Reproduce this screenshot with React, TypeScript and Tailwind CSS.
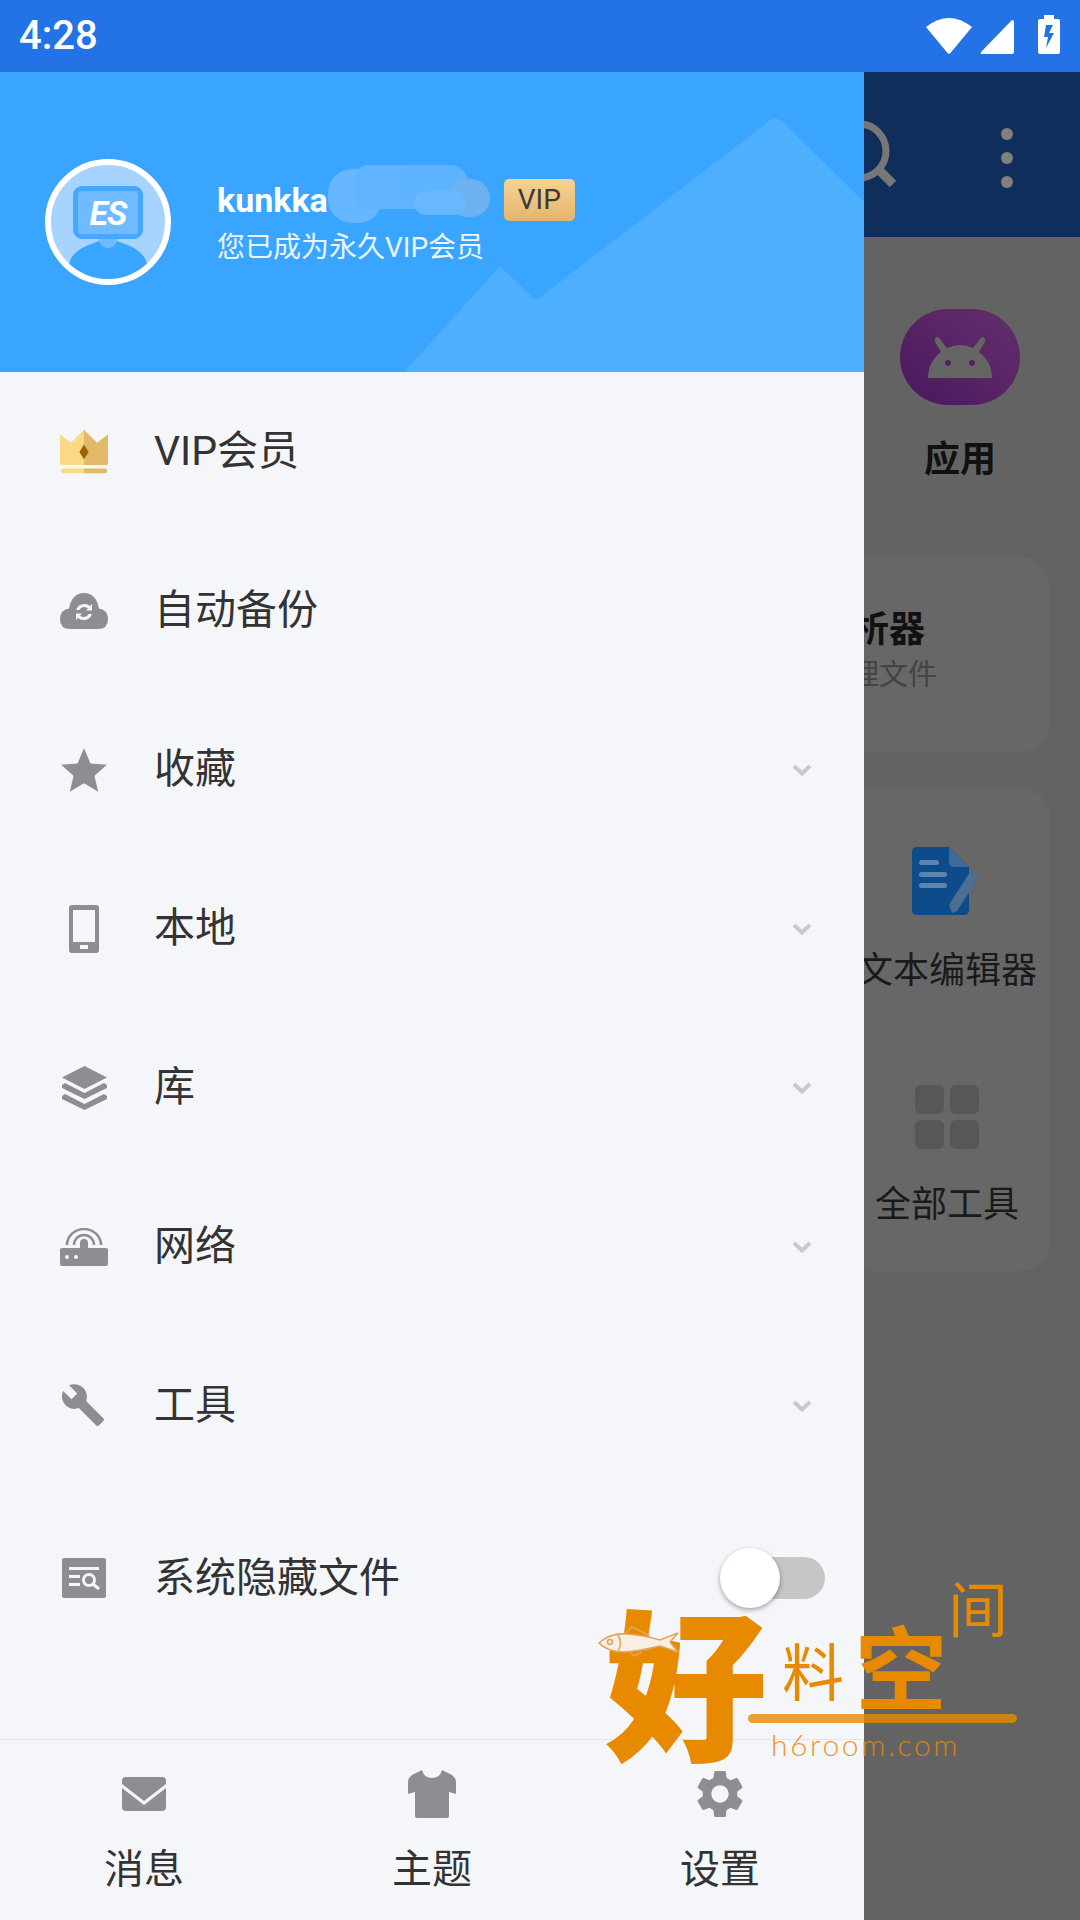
import React from "react";

const GRAY = "#8e8e92";

function Crown() {
  return (
    <svg width="52" height="47" viewBox="0 0 52 47">
      <path d="M0 5 L12 14 L26 0 L26 38 L2 38 Q0 38 0 36 Z" fill="#fbd987" />
      <path d="M52 5 L40 14 L26 0 L26 38 L50 38 Q52 38 52 36 Z" fill="#e2b968" />
      <path d="M26 16 L31 24 L26 32 L21 24 Z" fill="#9a6205" />
      <path d="M3 42 H26 V47 H3 Q1 47 1 44.5 Q1 42 3 42 Z" fill="#fbd987" />
      <path d="M49 42 H26 V47 H49 Q51 47 51 44.5 Q51 42 49 42 Z" fill="#e2b968" />
    </svg>
  );
}

function Cloud() {
  return (
    <svg width="48" height="36" viewBox="0 0 48 36">
      <path d="M10 36 Q0 36 0 26 Q0 17 9 15.5 Q12 0 24 0 Q36 0 39 15.5 Q48 17 48 26 Q48 36 38 36 Z" fill={GRAY} />
      <path d="M16 17 Q18 11 24.5 11 Q28 11 30 13 L32 11 V17.5 H26 L28 15.5 Q26.5 14 24.5 14 Q21 14 19.5 17 Z" fill="#f4f6f9" />
      <path d="M32 21 Q30 27 23.5 27 Q20 27 18 25 L16 27 V20.5 H22 L20 22.5 Q21.5 24 23.5 24 Q27 24 28.5 21 Z" fill="#f4f6f9" />
    </svg>
  );
}

function Star() {
  return (
    <svg width="46" height="46" viewBox="2 2 20 19">
      <path d="M12 17.27L18.18 21l-1.64-7.03L22 9.24l-7.19-.61L12 2 9.19 8.63 2 9.24l5.46 4.73L5.82 21z" fill={GRAY} />
    </svg>
  );
}

function Phone() {
  return (
    <svg width="30" height="48" viewBox="0 0 30 48">
      <path fillRule="evenodd" d="M3 0 H27 Q30 0 30 3 V45 Q30 48 27 48 H3 Q0 48 0 45 V3 Q0 0 3 0 Z M4 5 V37 H26 V5 Z M11 40 V44 H19 V40 Z" fill={GRAY} />
    </svg>
  );
}

function Layers() {
  return (
    <svg width="45" height="44" viewBox="0 0 45 44">
      <path d="M22.5 0 L45 11.5 L22.5 23 L0 11.5 Z" fill={GRAY} />
      <path d="M3 17 L22.5 27 L42 17 L45 19 L45 22 L22.5 33 L0 22 L0 19 Z" fill={GRAY} />
      <path d="M3 28 L22.5 38 L42 28 L45 30 L45 33 L22.5 44 L0 33 L0 30 Z" fill={GRAY} />
    </svg>
  );
}

function Router() {
  return (
    <svg width="48" height="38" viewBox="0 0 48 38">
      <path d="M2 20 H20 V15 A4 4 0 1 1 28 15 V20 H46 Q48 20 48 22 V36 Q48 38 46 38 H2 Q0 38 0 36 V22 Q0 20 2 20 Z" fill={GRAY} />
      <circle cx="7" cy="29" r="2" fill="#f4f6f9" />
      <circle cx="16" cy="29" r="2" fill="#f4f6f9" />
      <path d="M14 17 A10 10 0 0 1 34 17" fill="none" stroke={GRAY} strokeWidth="2.5" />
      <path d="M7 17 A17 16 0 0 1 41 17" fill="none" stroke={GRAY} strokeWidth="2.5" />
    </svg>
  );
}

function Wrench() {
  return (
    <svg width="46" height="44" viewBox="1 1 23 23">
      <path d="M22.7 19l-9.1-9.1c.9-2.3.4-5-1.5-6.9-2-2-5-2.4-7.4-1.3L9 6 6 9 1.6 4.7C.4 7.1.9 10.1 2.9 12.1c1.9 1.9 4.6 2.4 6.9 1.5l9.1 9.1c.4.4 1 .4 1.4 0l2.3-2.3c.5-.4.5-1.1.1-1.4z" fill={GRAY} />
    </svg>
  );
}

function SysFile() {
  return (
    <svg width="44" height="40" viewBox="0 0 44 40">
      <rect width="44" height="40" rx="2" fill={GRAY} />
      <rect x="7" y="9" width="30" height="3" fill="#f4f6f9" />
      <rect x="7" y="17" width="11" height="3" fill="#f4f6f9" />
      <rect x="7" y="25" width="11" height="3" fill="#f4f6f9" />
      <circle cx="27" cy="22" r="5.5" fill="none" stroke="#f4f6f9" strokeWidth="3" />
      <path d="M31 26 L37 31" stroke="#f4f6f9" strokeWidth="3" />
    </svg>
  );
}

function Chevron() {
  return (
    <svg width="20" height="12" viewBox="0 0 20 12">
      <path d="M2 2 L10 9.5 L18 2" fill="none" stroke="#c9c9cb" strokeWidth="4" />
    </svg>
  );
}

function Envelope() {
  return (
    <svg width="44" height="34" viewBox="0 0 44 34">
      <path d="M4 0 H40 Q44 0 44 4 V7 L22 24 L0 7 V4 Q0 0 4 0 Z" fill={GRAY} />
      <path d="M0 11 L22 28 L44 11 V30 Q44 34 40 34 H4 Q0 34 0 30 Z" fill={GRAY} />
    </svg>
  );
}

function Shirt() {
  return (
    <svg width="48" height="48" viewBox="0 0 48 48">
      <path d="M14 0 Q16 8 24 8 Q32 8 34 0 L42 4 Q48 7 48 12 V24 L41 22 V46 Q41 48 39 48 H9 Q7 48 7 46 V22 L0 24 V12 Q0 7 6 4 Z" fill={GRAY} />
    </svg>
  );
}

function Gear() {
  return (
    <svg width="50" height="50" viewBox="2 1.6 20 20.8">
      <path fillRule="evenodd" d="M19.14 12.94c.04-.3.06-.61.06-.94 0-.32-.02-.64-.07-.94l2.03-1.58c.18-.14.23-.41.12-.61l-1.92-3.32c-.12-.22-.37-.29-.59-.22l-2.39.96c-.5-.38-1.03-.7-1.62-.94l-.36-2.54c-.04-.24-.24-.41-.48-.41h-3.84c-.24 0-.43.17-.47.41l-.36 2.54c-.59.24-1.13.57-1.62.94l-2.39-.96c-.22-.08-.47 0-.59.22L2.74 8.87c-.12.21-.08.47.12.61l2.03 1.58c-.05.3-.09.63-.09.94s.02.64.07.94l-2.03 1.58c-.18.14-.23.41-.12.61l1.92 3.32c.12.22.37.29.59.22l2.39-.96c.5.38 1.03.7 1.62.94l.36 2.54c.05.24.24.41.48.41h3.84c.24 0 .44-.17.47-.41l.36-2.54c.59-.24 1.13-.56 1.62-.94l2.39.96c.22.08.47 0 .59-.22l1.92-3.32c.12-.22.07-.47-.12-.61l-2.01-1.58zM12 15.6c-1.98 0-3.6-1.62-3.6-3.6s1.62-3.6 3.6-3.6 3.6 1.62 3.6 3.6-1.62 3.6-3.6 3.6z" fill={GRAY} />
    </svg>
  );
}

function Avatar() {
  return (
    <div className="relative w-[126px] h-[126px] shrink-0 rounded-full border-[6px] border-white bg-[#a6d3ff] overflow-hidden">
      <svg className="absolute left-0 top-0" width="114" height="114" viewBox="0 0 114 114">
        <path d="M18 100 Q20 82 57 74 Q94 82 96 100 L92 106 Q80 118 57 118 Q34 118 22 106 Z" fill="#3aa5ff" />
        <path d="M47 70 H67 Q66 83 57 83 Q48 83 47 70 Z" fill="#70bbff" />
      </svg>
      <div className="absolute left-[22px] top-[21px] w-[70px] h-[53px] rounded-[9px] bg-[#45a7ff] p-[5px]">
        <div className="w-full h-full rounded-[3px] bg-[#70bbff] flex items-center justify-center">
          <span className="text-white font-bold italic text-[34px] leading-none tracking-[-1px]">ES</span>
        </div>
      </div>
    </div>
  );
}

function NameBlur() {
  return (
    <div className="relative w-[162px] h-[58px] shrink-0 -mt-[12px]">
      <div className="absolute left-0 top-[4px] w-[54px] h-[54px] rounded-[24px] bg-[#66b7ff]" />
      <div className="absolute left-[28px] top-0 w-[70px] h-[44px] rounded-[12px] bg-[#60b4ff]" />
      <div className="absolute left-[70px] top-[0px] w-[70px] h-[40px] rounded-[18px] bg-[#5eb3ff]" />
      <div className="absolute left-[120px] top-[14px] w-[42px] h-[38px] rounded-full bg-[#6db1ef]" />
      <div className="absolute left-[86px] top-[26px] w-[52px] h-[24px] rounded-[12px] bg-[#68b8ff]" />
    </div>
  );
}

function Header() {
  return (
    <div className="relative h-[300px] shrink-0 bg-[#3aa5ff] overflow-hidden">
      <svg className="absolute left-0 top-0" width="864" height="300" viewBox="0 0 864 300">
        <path d="M764 53 Q775 40 786 53 L864 130 L864 300 L568 300 L526 256 Q517 246 526 236 Z" fill="#4eaeff" />
        <path d="M500 194 L610 300 L404 300 Z" fill="#4eaeff" />
      </svg>
      <div className="relative flex items-center h-full pl-[45px] pb-[0px]">
        <Avatar />
        <div className="ml-[46px] flex flex-col -mt-[1px]">
          <div className="flex items-center h-[42px]">
            <span className="text-white font-bold text-[34px] leading-none">kunkka</span>
            <NameBlur />
            <span className="ml-[14px] w-[71px] h-[42px] flex items-center justify-center rounded-[5px] bg-gradient-to-b from-[#f6d291] to-[#e4b66d] text-[#3a3a3a] text-[28px] leading-none">VIP</span>
          </div>
          <span className="mt-[11px] text-[#eaf5ff] text-[28px] leading-[32px]">您已成为永久VIP会员</span>
        </div>
      </div>
    </div>
  );
}

function Row({ icon, label, chevron, tall }: { icon: React.ReactNode; label: string; chevron?: boolean; tall?: boolean }) {
  return (
    <div className={`relative flex items-center shrink-0 pl-[60px] pr-[52px] ${tall ? "h-[186px]" : "h-[159px]"}`}>
      <div className="w-[48px] h-[48px] flex items-center justify-center shrink-0">{icon}</div>
      <span className="ml-[46px] flex-1 text-[41px] leading-none text-[#333333]">{label}</span>
      {chevron && <Chevron />}
    </div>
  );
}

function Toggle() {
  return (
    <div className="absolute right-[39px] top-[63px] w-[105px] h-[60px] flex items-center justify-end">
      <div className="w-[90px] h-[42px] rounded-full bg-[#c6c6c6]" />
      <div className="absolute left-0 top-0 w-[60px] h-[60px] rounded-full bg-white shadow-[0_2px_5px_rgba(0,0,0,0.35)]" />
    </div>
  );
}

function FootItem({ icon, label }: { icon: React.ReactNode; label: string }) {
  return (
    <div className="flex flex-col items-center">
      <div className="h-[50px] flex items-center justify-center">{icon}</div>
      <span className="mt-[29px] text-[40px] leading-[44px] text-[#333333]">{label}</span>
    </div>
  );
}

function Drawer() {
  return (
    <div className="w-[864px] shrink-0 flex flex-col bg-[#f4f6f9]">
      <Header />
      <Row icon={<Crown />} label="VIP会员" />
      <Row icon={<Cloud />} label="自动备份" />
      <Row icon={<Star />} label="收藏" chevron />
      <Row icon={<Phone />} label="本地" chevron />
      <Row icon={<Layers />} label="库" chevron />
      <Row icon={<Router />} label="网络" chevron />
      <Row icon={<Wrench />} label="工具" chevron />
      <div className="relative">
        <Row icon={<SysFile />} label="系统隐藏文件" tall />
        <Toggle />
      </div>
      <div className="flex-1" />
      <div className="h-[181px] shrink-0 border-t border-[#e4e5e8] grid grid-cols-3 pt-[29px]">
        <FootItem icon={<Envelope />} label="消息" />
        <FootItem icon={<Shirt />} label="主题" />
        <FootItem icon={<Gear />} label="设置" />
      </div>
    </div>
  );
}

function BackPanel() {
  return (
    <div className="flex-1 min-w-0 overflow-hidden flex flex-col items-end bg-[#636363]">
      <div className="w-full h-[165px] shrink-0 bg-[#102e5c] flex items-center justify-end pr-[67px] relative">
        <svg className="absolute left-[-40px] top-[48px]" width="90" height="70" viewBox="0 0 90 70">
          <circle cx="35" cy="31" r="27" fill="none" stroke="#777777" strokeWidth="7" />
          <path d="M55 50 L69 64" stroke="#777777" strokeWidth="9" />
        </svg>
        <div className="flex flex-col gap-[12px] mt-[7px]">
          <div className="w-[12px] h-[12px] rounded-full bg-[#808080]" />
          <div className="w-[12px] h-[12px] rounded-full bg-[#808080]" />
          <div className="w-[12px] h-[12px] rounded-full bg-[#808080]" />
        </div>
      </div>
      <div className="mt-[72px] mr-[60px] w-[120px] h-[96px] rounded-[48px] bg-gradient-to-tr from-[#4b175e] to-[#632f6c] flex items-center justify-center">
        <svg width="64" height="42" viewBox="0 0 64 42">
          <path d="M0 42 Q0 26 13 16 L7 6 Q6 2 9 1 Q11 1 12 3 L19 12 Q32 6 45 12 L52 3 Q53 1 55 1 Q58 2 57 6 L51 16 Q64 26 64 42 Z" fill="#656565" />
          <circle cx="20" cy="27" r="3" fill="#562066" />
          <circle cx="44" cy="27" r="3" fill="#562066" />
        </svg>
      </div>
      <div className="mt-[32px] mr-[60px] w-[120px] text-center text-[36px] leading-[46px] font-bold text-[#111111] whitespace-nowrap">应用</div>
      <div className="mt-[74px] mr-[30px] w-[236px] h-[195px] shrink-0 rounded-[30px] bg-[#676767] flex flex-col items-end pt-[50px]">
        <div className="mr-[125px] text-[36px] leading-[46px] font-bold text-[#111111] whitespace-nowrap">存储分析器</div>
        <div className="mr-[113px] mt-[4px] text-[29px] leading-[36px] text-[#444444] whitespace-nowrap">快速管理文件</div>
      </div>
      <div className="mt-[36px] mr-[30px] w-[206px] h-[483px] shrink-0 rounded-[30px] bg-[#676767] flex flex-col items-center pt-[59px]">
        <svg width="70" height="68" viewBox="0 0 70 68">
          <path d="M5 0 H37 L57 20 V63 Q57 68 52 68 H5 Q0 68 0 63 V5 Q0 0 5 0 Z" fill="#0d4b8b" />
          <path d="M37 0 L57 20 H42 Q37 20 37 15 Z" fill="#3f6a98" />
          <rect x="7" y="13" width="20" height="5" rx="2.5" fill="#5c85ad" />
          <rect x="7" y="25" width="28" height="5" rx="2.5" fill="#5c85ad" />
          <rect x="7" y="36" width="28" height="5" rx="2.5" fill="#5c85ad" />
          <path d="M58 25 L67 30 L45 64 L40 66 L37 58 Z" fill="#4d6f94" />
        </svg>
        <div className="mt-[33px] text-[36px] leading-[46px] text-[#1a1a1a] whitespace-nowrap">文本编辑器</div>
        <div className="mt-[91px] grid grid-cols-2 gap-[6px]">
          <div className="w-[29px] h-[29px] rounded-[6px] bg-[#565858]" />
          <div className="w-[29px] h-[29px] rounded-[6px] bg-[#565858]" />
          <div className="w-[29px] h-[29px] rounded-[6px] bg-[#565858]" />
          <div className="w-[29px] h-[29px] rounded-[6px] bg-[#565858]" />
        </div>
        <div className="mt-[33px] text-[36px] leading-[46px] text-[#1a1a1a] whitespace-nowrap">全部工具</div>
      </div>
    </div>
  );
}

function Fish() {
  return (
    <svg className="absolute left-[598px] top-[1625px]" width="82" height="33" viewBox="0 0 82 33" fill="none" stroke="#e0a560" strokeWidth="1.6">
      <path d="M1 18 Q12 8 28 9 Q45 10 62 15 L80 8 L72 17 L80 27 L62 21 Q42 26 26 27 Q10 27 1 18 Z" fill="#f8efe2" />
      <path d="M26 9 L34 2 L52 11" />
      <path d="M32 27 L36 31 L44 27" />
      <path d="M46 25 L58 22" />
      <circle cx="12" cy="17" r="2.5" />
      <path d="M20 10 Q25 18 20 26" />
    </svg>
  );
}

function Watermark() {
  return (
    <div className="absolute inset-0 pointer-events-none font-['Noto_Sans_CJK_SC',sans-serif] text-[#e88a00]">
      <span className="absolute left-[606px] top-[1562px] text-[160px] leading-[230px] font-black [-webkit-text-stroke:2px_#e88a00]">好</span>
      <Fish />
      <span className="absolute left-[782px] top-[1624px] text-[62px] leading-[90px]">料</span>
      <span className="absolute left-[855px] top-[1604px] text-[92px] leading-[120px] font-bold">空</span>
      <span className="absolute left-[948px] top-[1564px] text-[60px] leading-[84px]">间</span>
      <div className="absolute left-[748px] top-[1714px] w-[269px] h-[9px] rounded-full bg-[#e88a00]/80" />
      <span className="absolute left-[771px] top-[1726px] text-[30px] leading-[36px] font-['Lato',sans-serif] font-light tracking-[2.6px] opacity-85">h6room.com</span>
    </div>
  );
}

function StatusBar() {
  return (
    <div className="h-[72px] shrink-0 bg-[#2473e6] flex items-center justify-between pl-[19px] pr-[20px]">
      <span className="text-white font-medium text-[40px] leading-none">4:28</span>
      <div className="flex items-center gap-[8px]">
        <svg width="46" height="36" viewBox="0 0 46 36" className="mt-[-1px]">
          <path d="M0 9 Q23 -9 46 9 L24.5 35 Q23 36.5 21.5 35 Z" fill="#ffffff" />
        </svg>
        <svg width="34" height="34" viewBox="0 0 34 34" className="mt-[2px]">
          <path d="M32 0 Q34 0 34 2 V32 Q34 34 32 34 H2 Q0 34 1 32 Z" fill="#ffffff" />
        </svg>
        <svg width="22" height="39" viewBox="0 0 22 39" className="ml-[16px] mt-[-3px]">
          <path fillRule="evenodd" d="M6 0 H16 V4 H20 Q22 4 22 6 V37 Q22 39 20 39 H2 Q0 39 0 37 V6 Q0 4 2 4 H6 Z M8 10 L6 22 H10 L8 33 L16 18 H11 L15 10 Z" fill="#ffffff" />
        </svg>
      </div>
    </div>
  );
}

export default function App() {
  return (
    <div className="relative w-[1080px] h-[1920px] overflow-hidden flex flex-col font-['Roboto','Noto_Sans_CJK_SC',sans-serif]">
      <StatusBar />
      <div className="flex-1 min-h-0 flex">
        <Drawer />
        <BackPanel />
      </div>
      <Watermark />
    </div>
  );
}
